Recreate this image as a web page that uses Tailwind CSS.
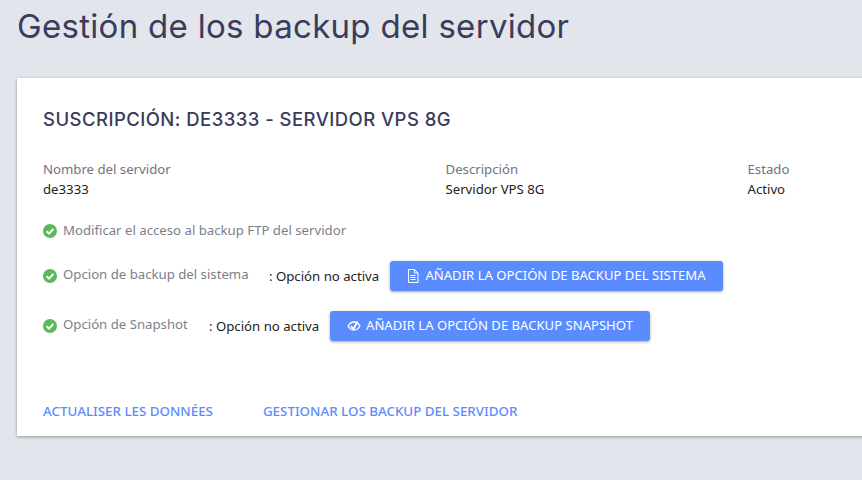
<!DOCTYPE html>
<html lang="es">
<head>
    <meta charset="UTF-8">
    <title>Backup</title>
    <script src="https://cdn.jsdelivr.net/npm/@tailwindcss/browser@4"></script>
</head>
<body class="bg-[#e2e5ec] h-[480px] overflow-hidden font-['Noto_Sans',sans-serif] text-[13.2px]">
<h1 class="pl-[17px] pt-[6px] h-[78px] font-['Inter',sans-serif] font-normal text-[33px] tracking-[0.3px] leading-[40px] text-[#3a3c5c]">Gestión de los backup del servidor</h1>

<div class="ml-[17px] w-[860px] h-[358px] bg-white shadow-[0_1px_3px_rgba(0,0,0,0.35)] pl-[26px] flex flex-col">
    <h2 class="mt-[30px] h-[22px] font-['Inter',sans-serif] font-medium text-[18.5px] tracking-[0.45px] leading-[22px] text-[#3a3c5c]">SUSCRIPCIÓN: DE3333 - SERVIDOR VPS 8G</h2>

    <div class="mt-[29px] flex leading-[20px]">
        <div class="w-[402.500px]">
            <p class="text-[#6f7480]">Nombre del servidor</p>
            <p class="text-[#222]">de3333</p>
        </div>
        <div class="w-[302px]">
            <p class="text-[#6f7480]">Descripción</p>
            <p class="text-[#222]">Servidor VPS 8G</p>
        </div>
        <div>
            <p class="text-[#6f7480]">Estado</p>
            <p class="text-[#222]">Activo</p>
        </div>
    </div>

    <div class="mt-[22px] h-[20px] flex items-center text-[#7a7f8a]">
        <svg class="w-[14px] h-[14px] mr-[6px]" viewBox="0 0 14 14"><circle cx="7" cy="7" r="7" fill="#5cb85c"/><path d="M3.6 7.2l2.4 2.4 4.4-4.6" fill="none" stroke="#fff" stroke-width="2"/></svg>
        Modificar el acceso al backup FTP del servidor
    </div>

    <div class="mt-[20px] h-[30px] flex items-center">
        <svg class="w-[14px] h-[14px] mr-[6px]" viewBox="0 0 14 14"><circle cx="7" cy="7" r="7" fill="#5cb85c"/><path d="M3.6 7.2l2.4 2.4 4.4-4.6" fill="none" stroke="#fff" stroke-width="2"/></svg>
        <span class="w-[206px] text-[#7a7f8a] -mt-[2px]">Opcion de backup del sistema</span>
        <span class="w-[121px] text-[#222] mt-[1px]">: Opción no activa</span>
        <button class="w-[333px] h-[30px] bg-[#5b8cff] text-white text-[13.100px] rounded-[3px] shadow-[0_1px_3px_rgba(0,0,0,0.35)] flex items-center justify-center">
            <svg class="w-[12px] h-[14px] mr-[6px]" viewBox="0 0 12 14" fill="none" stroke="#fff"><path d="M1.500.5h6l3.500 3.500v9.500h-9.500zM7.500.5v3.500h3.500M3.500 6.500h5M3.500 8.500h5M3.500 10.500h5"/></svg>
            AÑADIR LA OPCIÓN DE BACKUP DEL SISTEMA
        </button>
    </div>

    <div class="mt-[20px] h-[30px] flex items-center">
        <svg class="w-[14px] h-[14px] mr-[6px]" viewBox="0 0 14 14"><circle cx="7" cy="7" r="7" fill="#5cb85c"/><path d="M3.6 7.2l2.4 2.4 4.4-4.6" fill="none" stroke="#fff" stroke-width="2"/></svg>
        <span class="w-[146px] text-[#7a7f8a] -mt-[2px]">Opción de Snapshot</span>
        <span class="w-[121px] text-[#222] mt-[1px]">: Opción no activa</span>
        <button class="w-[320px] h-[30px] bg-[#5b8cff] text-white text-[13.100px] rounded-[3px] shadow-[0_1px_3px_rgba(0,0,0,0.35)] flex items-center justify-center">
            <svg class="w-[14px] h-[12px] mr-[5px]" viewBox="0 0 14 12" fill="none" stroke="#fff" stroke-width="1.3"><path d="M1 6c1.500-2.500 3.500-4 6-4s4.500 1.500 6 4c-1.500 2.500-3.500 4-6 4s-4.500-1.500-6-4z"/><path d="M4 6l2.500 3 4-7.500" stroke-width="1.800"/></svg>
            AÑADIR LA OPCIÓN DE BACKUP SNAPSHOT
        </button>
    </div>

    <div class="mt-[60px] flex font-medium text-[#5b8cff] text-[13.350px] leading-[20px]">
        <a class="mr-[50px]">ACTUALISER LES DONNÉES</a>
        <a>GESTIONAR LOS BACKUP DEL SERVIDOR</a>
    </div>
</div>
</body>
</html>
